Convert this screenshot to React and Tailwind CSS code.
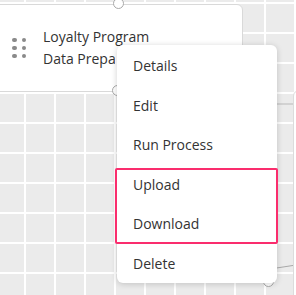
import React from 'react';

const menuItems = ['Details', 'Edit', 'Run Process'];

function Handle({ className }) {
  return (
    <div
      className={`absolute w-[11px] h-[11px] rounded-full bg-white border border-[#a9a9a9] ${className}`}
    />
  );
}

function DragDots() {
  return (
    <div className="grid grid-cols-2 gap-x-[5px] gap-y-[3.5px]">
      {[0, 1, 2, 3, 4, 5].map((i) => (
        <span key={i} className="block w-[4.5px] h-[4.5px] rounded-full bg-[#8a8a8a]" />
      ))}
    </div>
  );
}

function MenuItem({ label }) {
  return (
    <div className="h-[39.5px] flex items-center pl-[16px] text-[14px] text-[#333]">
      {label}
    </div>
  );
}

export default function App() {
  return (
    <div
      className="relative w-[296px] h-[295px] overflow-hidden bg-[#ebebeb] bg-[image:linear-gradient(to_right,#ffffff_2px,transparent_2px),linear-gradient(to_bottom,#ffffff_2px,transparent_2px)] bg-[size:30px_30px] bg-[position:24px_2px]"
      style={{ fontFamily: '"Open Sans", "Noto Sans", sans-serif' }}
    >
      {/* edges */}
      <svg className="absolute inset-0" width="296" height="295">
        <line x1="270" y1="104" x2="296" y2="104" stroke="#b9b9b9" strokeWidth="1" />
        <line x1="270" y1="269" x2="296" y2="265" stroke="#a9a9a9" strokeWidth="1" />
      </svg>

      {/* node on the right edge */}
      <div className="absolute left-[293px] top-[90px] w-[30px] h-[220px] bg-white border border-[#dcdcdc] rounded-md" />

      {/* main node */}
      <div className="absolute left-[-10px] top-[4px] w-[253px] h-[88px] bg-white border border-[#d9d9d9] rounded-md flex items-center pl-[21px]">
        <DragDots />
        <div className="ml-[17px] text-[14px] leading-[22px] text-[#333]">
          <div className="whitespace-nowrap">Loyalty Program</div>
          <div className="w-[72px] overflow-hidden whitespace-nowrap">Data Preparation</div>
        </div>
      </div>
      <Handle className="left-[113px] top-[-2px]" />
      <Handle className="left-[112px] top-[85px]" />
      <Handle className="left-[263px] top-[276px]" />

      {/* context menu */}
      <div className="absolute left-[117px] top-[45px] w-[160px] h-[238px] bg-white rounded-md shadow-[0_1px_6px_rgba(0,0,0,0.18)] pt-[1px]">
        {menuItems.map((m) => (
          <MenuItem key={m} label={m} />
        ))}
        <div className="relative">
          <MenuItem label="Upload" />
          <MenuItem label="Download" />
          <div className="absolute left-[-2.5px] right-[-1px] top-[3px] bottom-[0px] border-[2.5px] border-[#fa2d6d] rounded-[2px]" />
        </div>
        <MenuItem label="Delete" />
      </div>
    </div>
  );
}
